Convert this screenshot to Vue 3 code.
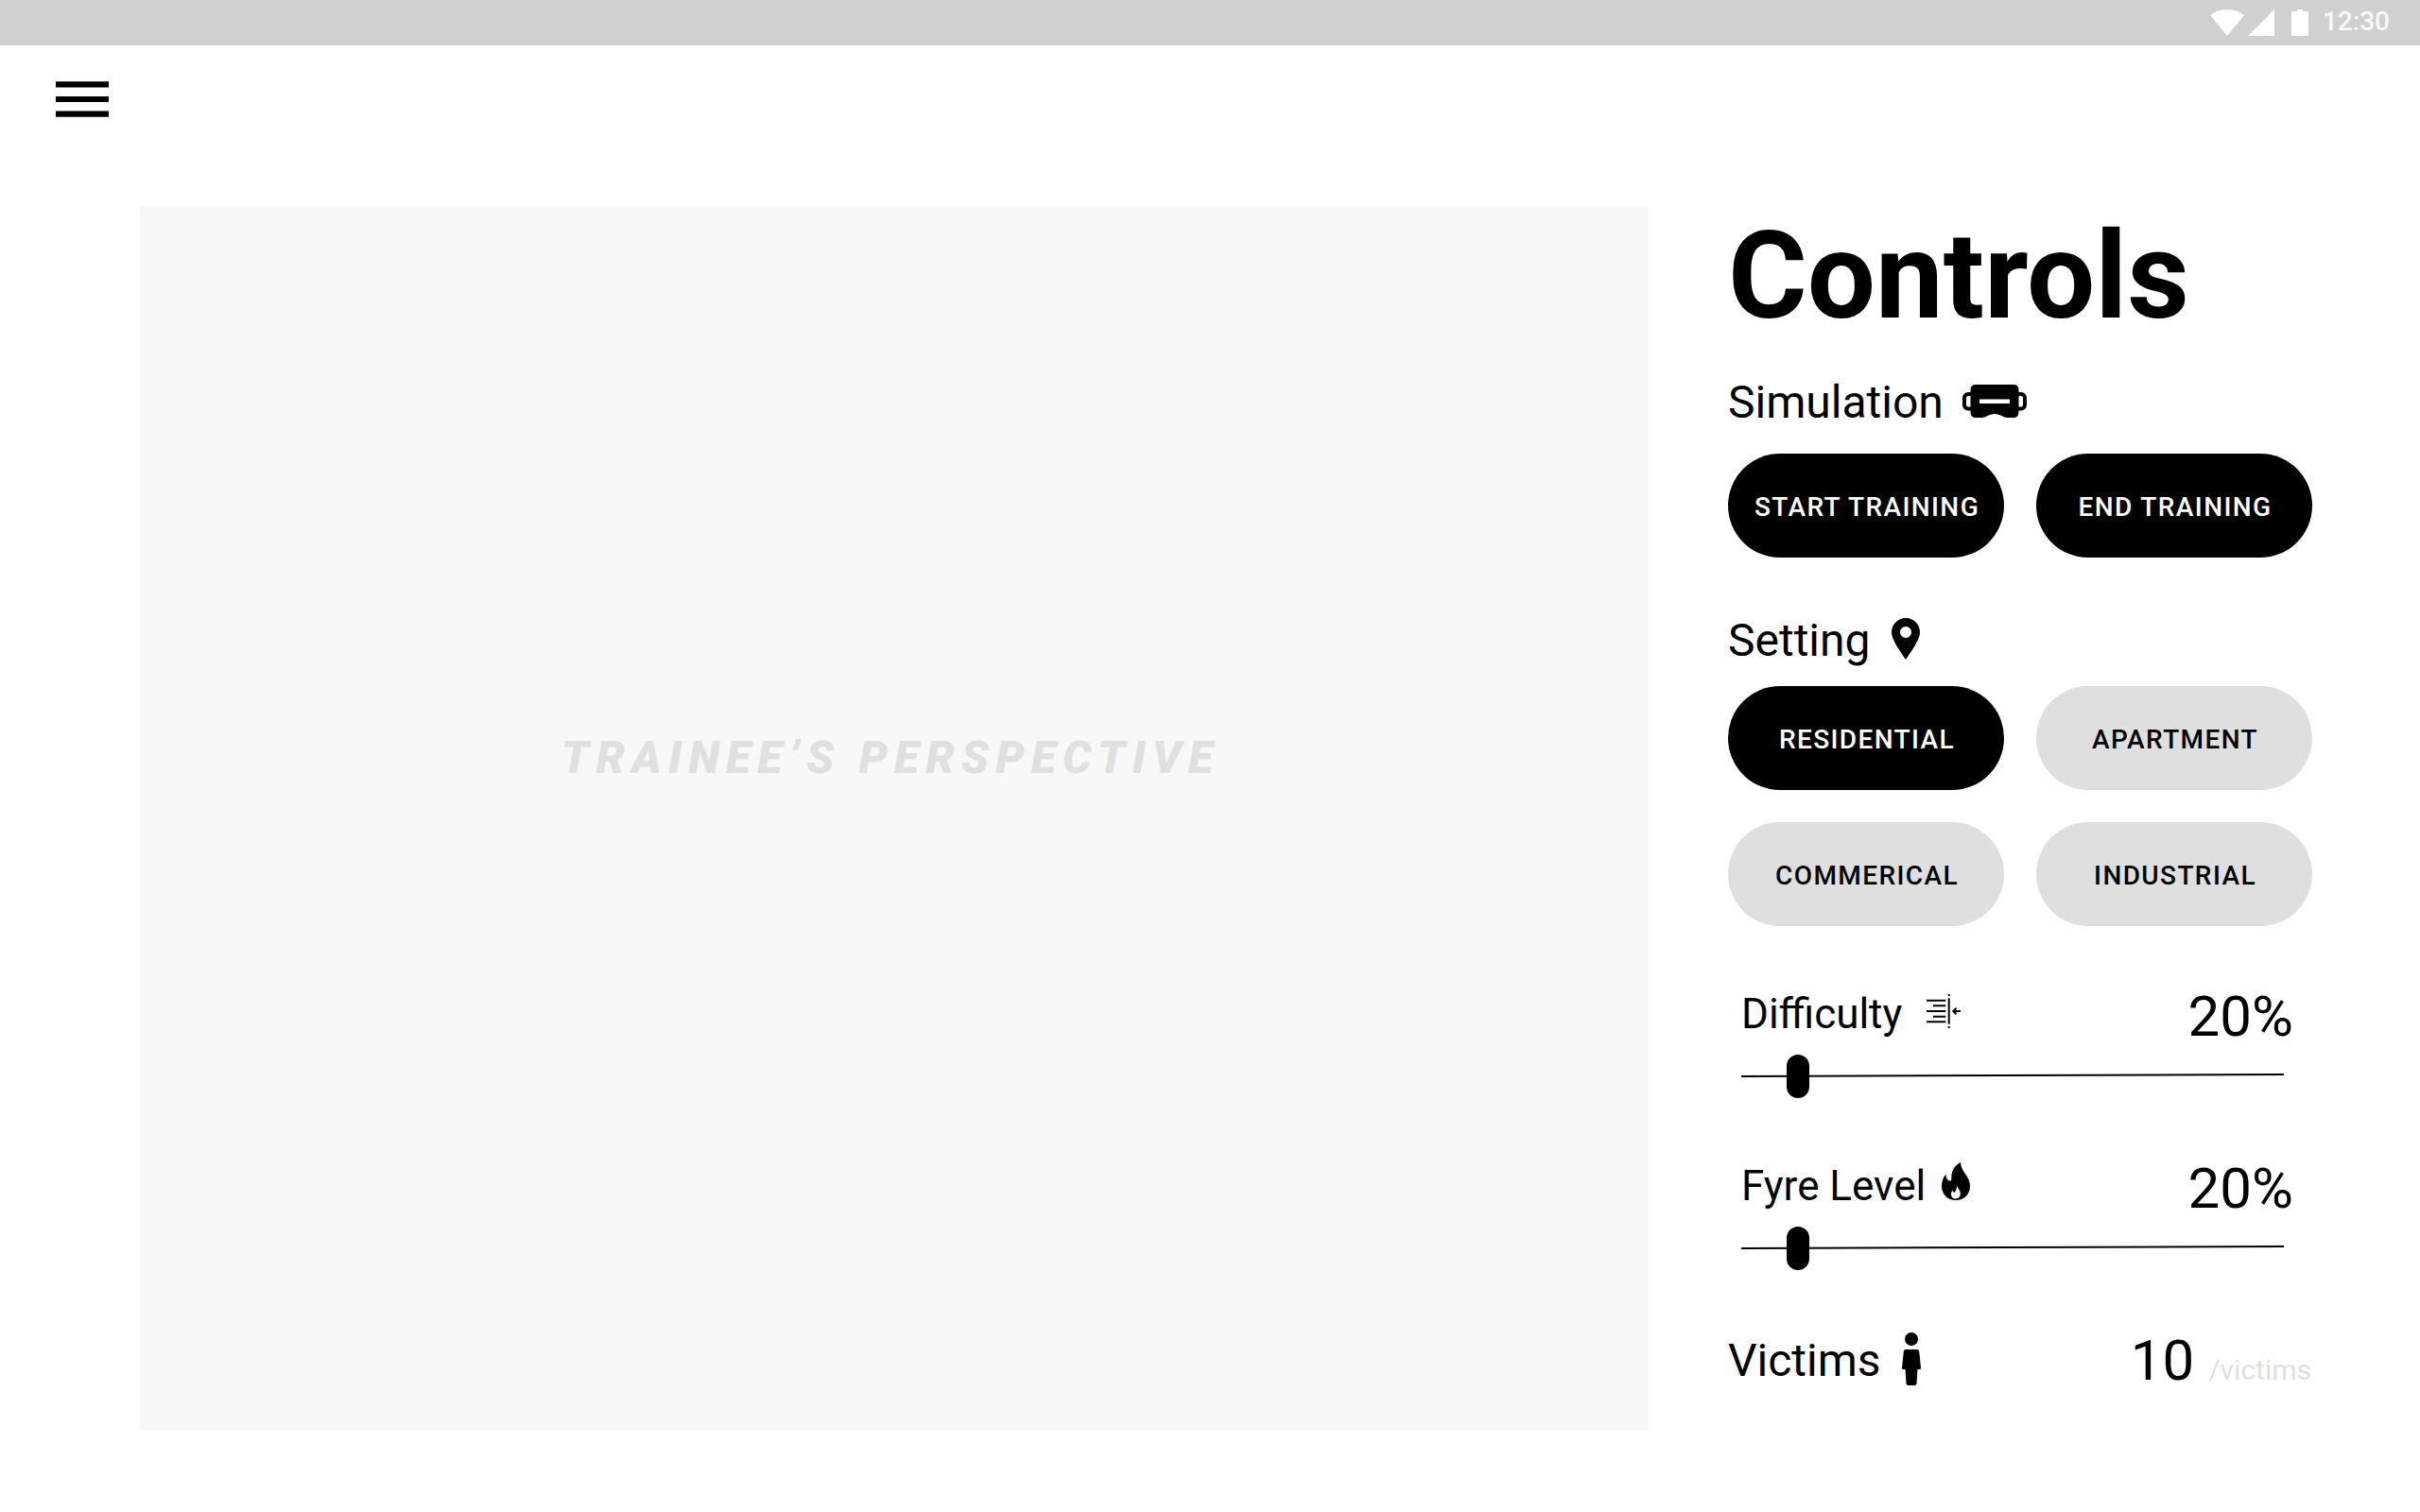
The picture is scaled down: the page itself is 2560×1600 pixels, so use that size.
<script setup>
import { ref, reactive } from 'vue'

const settings = ['Residential', 'Apartment', 'Commerical', 'Industrial']
const activeSetting = ref('Residential')

const levels = reactive([
  { id: 'difficulty', label: 'Difficulty', percent: 20, position: 8.7 },
  { id: 'fyre', label: 'Fyre Level', percent: 20, position: 8.7 },
])

const victims = ref(10)
</script>

<template>
  <div class="page">
    <div class="status">
      <div class="signals">
        <svg width="36" height="28" viewBox="0 0 36 28" aria-hidden="true">
          <path d="M0 6C5 2 11 0 18 0s13 2 18 6L18 28z" />
        </svg>
        <svg width="28" height="28" viewBox="0 0 28 28" aria-hidden="true">
          <path d="M28 0v28H0z" />
        </svg>
      </div>
      <svg width="18" height="28" viewBox="0 0 18 28" aria-hidden="true">
        <path d="M6 0h6v2h6v26H0V2h6z" />
      </svg>
      <time class="clock">12:30</time>
    </div>

    <header class="bar">
      <button class="menu" type="button" aria-label="Menu">
        <svg width="56" height="38" viewBox="3 6 18 12" aria-hidden="true">
          <path d="M3 18h18v-2H3v2zm0-5h18v-2H3v2zm0-7v2h18V6H3z" />
        </svg>
      </button>
    </header>

    <main class="content">
      <section class="view">
        <p class="view-label">TRAINEE’S PERSPECTIVE</p>
      </section>

      <aside class="controls">
        <h1>Controls</h1>

        <section class="simulation">
          <h2 class="heading">
            Simulation
            <svg width="68" height="36" viewBox="0 -1 68 36" aria-hidden="true">
              <rect x="2" y="10" width="14" height="15.500" rx="4" fill="none" stroke="#000" stroke-width="4" />
              <rect x="52" y="10" width="14" height="15.500" rx="4" fill="none" stroke="#000" stroke-width="4" />
              <path
                fill-rule="evenodd"
                d="M14 0h40q5.500 0 5.500 5.500V29q0 6-6 6H48c-5 0-8-4-14-4S25 35 20 35h-5.500q-6 0-6-6V5.500Q8.500 0 14 0zM15.500 15.500v4.500h37v-4.500z"
              />
            </svg>
          </h2>
          <div class="grid">
            <button class="pill dark" type="button">START TRAINING</button>
            <button class="pill dark" type="button">END TRAINING</button>
          </div>
        </section>

        <section class="setting">
          <h2 class="heading">
            Setting
            <svg width="32" height="44" viewBox="-2 0 32 44" aria-hidden="true">
              <path
                fill-rule="evenodd"
                d="M15 0C6.700 0 0 6.700 0 15c0 8 9 20 15 29 6-9 15-21 15-29C30 6.700 23.300 0 15 0zM15 9a6 6 0 1 1 0 12 6 6 0 0 1 0-12z"
              />
            </svg>
          </h2>
          <div class="grid">
            <button
              v-for="name in settings"
              :key="name"
              class="pill"
              :class="{ dark: name === activeSetting }"
              type="button"
              :aria-pressed="name === activeSetting"
              @click="activeSetting = name"
            >{{ name.toUpperCase() }}</button>
          </div>
        </section>

        <section v-for="level in levels" :key="level.id" class="level">
          <div class="level-head">
            <label class="level-label" :for="level.id">
              {{ level.label }}
              <svg v-if="level.id === 'difficulty'" width="46" height="42" viewBox="-10 0 46 42" aria-hidden="true">
                <path
                  d="M0 6.700h20.300M7 12.300h13.300M0 18h20.300M7 23.700h13.300M0 29.300h20.300M23.700 4.300v27.400M23.700 0v2M23.700 34v2M28 18h8"
                  fill="none"
                  stroke="#000"
                  stroke-width="2"
                />
                <path d="M31.500 14.800L28.300 18l3.200 3.200" fill="none" stroke="#000" stroke-width="2" />
              </svg>
              <svg v-else width="31" height="50" viewBox="-1 0 31 50" aria-hidden="true">
                <path
                  fill-rule="evenodd"
                  d="M20 0C20 10 30 14 30 25c0 9-6.500 15-15 15S0 34 0 25c0-5 1.500-9 4.500-12.500C4.500 16 5.500 18.500 8 19.500c1 .4 2.300 0 2.300-1.500C10 9 13 4 20 0zM16 24.700c0 3-.7 5-2.500 7.300-1-.3-1.700-1-2-2.200C10.500 31 10 32 10 33.500c0 3 2 5 4.800 5s5-2 5-5.200C19.800 29.500 17.500 28 16 24.700z"
                />
              </svg>
            </label>
            <output class="value" :for="level.id">{{ level.percent }}%</output>
          </div>
          <div class="slider">
            <svg class="track" viewBox="0 0 574 46" preserveAspectRatio="none" aria-hidden="true">
              <path d="M0 23L574 21" fill="none" stroke="#000" stroke-width="2" />
            </svg>
            <input
              :id="level.id"
              v-model="level.position"
              type="range"
              min="0"
              max="100"
              step="0.1"
              :aria-valuetext="level.percent + '%'"
            />
          </div>
        </section>

        <section class="victims">
          <h2 class="heading">
            Victims
            <svg width="22" height="56" viewBox="-2 0 22 56" aria-hidden="true">
              <circle cx="10" cy="7" r="7" />
              <path d="M4 18h12q2 0 2.200 2L20 37.500q.2 1.500-1 1.500h-2.500L15.500 54q-.2 2-2 2h-7q-1.800 0-2-2L3.500 39H1q-1.200 0-1-1.500L1.800 20Q2 18 4 18z" />
            </svg>
          </h2>
          <p class="count">
            <span class="value">{{ victims }}</span>
            <span class="unit">/victims</span>
          </p>
        </section>
      </aside>
    </main>
  </div>
</template>

<style>
body {
  margin: 0;
  background: #fff;
}
</style>

<style scoped>
.page {
  font-family: Roboto, "Liberation Sans", sans-serif;
  color: #000;
}

h1,
h2,
p {
  margin: 0;
  font-weight: 400;
}

svg {
  display: block;
  flex: none;
}

.status {
  display: flex;
  align-items: center;
  justify-content: flex-end;
  height: 48px;
  padding-right: 32px;
  background: #d0d0d0;
  fill: #fff;
}

.signals {
  display: flex;
  gap: 4px;
  margin-right: 18px;
}

.clock {
  height: 48px;
  margin-left: 15px;
  font-size: 28px;
  font-weight: 500;
  line-height: 46px;
  color: #fafafa;
}

.bar {
  padding: 38px 59px 94px;
}

.menu {
  display: block;
  padding: 0;
  border: 0;
  background: none;
  cursor: pointer;
}

.content {
  display: grid;
  grid-template-columns: 1fr 618px;
  gap: 84px;
  padding: 0 114px 86px 148px;
}

.view {
  display: flex;
  align-items: center;
  justify-content: center;
  padding: 0 8px 128px 0;
  background: #f8f8f8;
}

.view-label {
  font-size: 48px;
  font-style: italic;
  font-weight: 900;
  line-height: 56px;
  letter-spacing: 0.15em;
  color: #e0e0e0;
}

.controls {
  display: flex;
  flex-direction: column;
  gap: 60px;
  padding-bottom: 38px;
}

h1 {
  margin-bottom: -28px;
  font-size: 128px;
  font-weight: 700;
  line-height: 148px;
}

.heading {
  display: flex;
  align-items: center;
  gap: 20px;
  height: 56px;
  font-size: 48px;
  line-height: 56px;
}

.heading svg {
  margin-bottom: 4px;
}

.simulation .heading {
  margin-bottom: 26px;
}

.setting .heading {
  margin-bottom: 20px;
}

.grid {
  display: grid;
  grid-template-columns: 1fr 1fr;
  gap: 34px;
}

.pill {
  height: 110px;
  padding: 2px 0 0 2px;
  border: 0;
  border-radius: 55px;
  background: #dfdfdf;
  color: #000;
  font-family: inherit;
  font-size: 28px;
  font-weight: 500;
  letter-spacing: 0.05em;
  cursor: pointer;
}

.pill.dark {
  background: #000;
  color: #fff;
}

.level {
  display: flex;
  flex-direction: column;
  gap: 4px;
  padding-left: 14px;
}

.level-head {
  display: flex;
  align-items: flex-start;
  justify-content: space-between;
  padding-right: 20px;
}

.level-label {
  display: flex;
  align-items: center;
  gap: 16px;
  font-size: 44px;
  line-height: 66px;
}

.value {
  font-size: 60px;
  line-height: 72px;
}

.slider {
  display: grid;
  margin-right: 30px;
}

.slider > * {
  grid-area: 1 / 1;
}

.track {
  width: 100%;
  height: 46px;
}

.slider input {
  appearance: none;
  width: 100%;
  height: 46px;
  margin: 0;
  background: transparent;
  cursor: pointer;
}

.slider input::-webkit-slider-thumb {
  appearance: none;
  width: 24px;
  height: 46px;
  border: 0;
  border-radius: 12px;
  background: #000;
}

.slider input::-moz-range-thumb {
  width: 24px;
  height: 46px;
  border: 0;
  border-radius: 12px;
  background: #000;
}

.victims {
  display: flex;
  align-items: center;
  justify-content: space-between;
}

.count {
  display: flex;
  align-items: baseline;
  gap: 15px;
  padding-right: 1px;
}

.unit {
  font-size: 30px;
  color: #dfdfdf;
}
</style>
